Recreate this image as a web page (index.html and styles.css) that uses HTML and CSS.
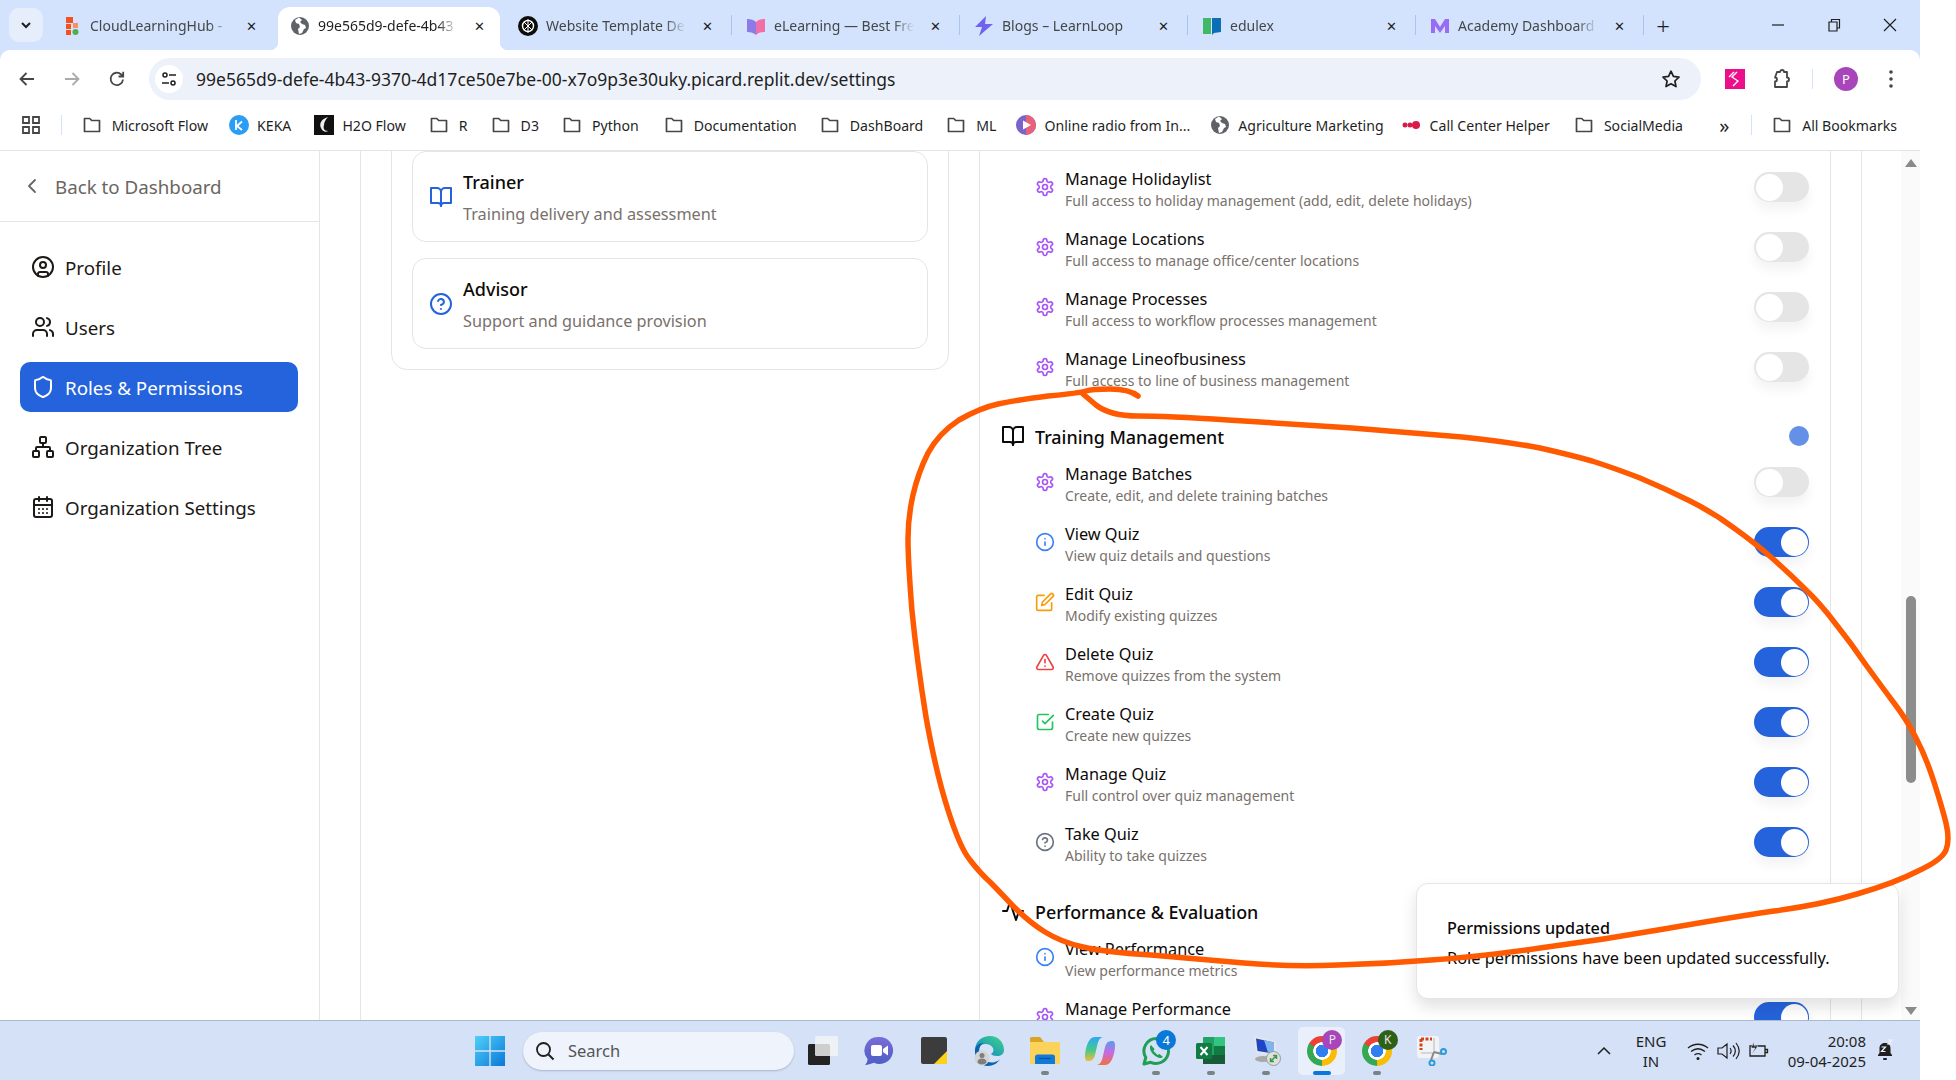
FILE: index.html
```html
<!DOCTYPE html>
<html>
<head>
    <meta charset="utf-8">
    <title>Roles &amp; Permissions</title>
    <link rel="stylesheet" href="styles.css">
</head>
<body>

<!-- icon sprite -->
<svg class="sprite" xmlns="http://www.w3.org/2000/svg">
	<symbol id="i-gear" viewBox="0 0 24 24"><path d="M12.22 2h-.44a2 2 0 0 0-2 2v.18a2 2 0 0 1-1 1.73l-.43.25a2 2 0 0 1-2 0l-.15-.08a2 2 0 0 0-2.73.73l-.22.38a2 2 0 0 0 .73 2.73l.15.1a2 2 0 0 1 1 1.72v.51a2 2 0 0 1-1 1.74l-.15.09a2 2 0 0 0-.73 2.73l.22.38a2 2 0 0 0 2.73.73l.15-.08a2 2 0 0 1 2 0l.43.25a2 2 0 0 1 1 1.73V20a2 2 0 0 0 2 2h.44a2 2 0 0 0 2-2v-.18a2 2 0 0 1 1-1.73l.43-.25a2 2 0 0 1 2 0l.15.08a2 2 0 0 0 2.73-.73l.22-.39a2 2 0 0 0-.73-2.73l-.15-.08a2 2 0 0 1-1-1.74v-.5a2 2 0 0 1 1-1.74l.15-.09a2 2 0 0 0 .73-2.73l-.22-.38a2 2 0 0 0-2.73-.73l-.15.08a2 2 0 0 1-2 0l-.43-.25a2 2 0 0 1-1-1.73V4a2 2 0 0 0-2-2z"/><circle cx="12" cy="12" r="3"/></symbol>
	<symbol id="i-book" viewBox="0 0 24 24"><path d="M2 3h6a4 4 0 0 1 4 4v14a3 3 0 0 0-3-3H2z"/><path d="M22 3h-6a4 4 0 0 0-4 4v14a3 3 0 0 1 3-3h7z"/></symbol>
	<symbol id="i-help" viewBox="0 0 24 24"><circle cx="12" cy="12" r="10"/><path d="M9.09 9a3 3 0 0 1 5.83 1c0 2-3 3-3 3"/><path d="M12 17h.01"/></symbol>
	<symbol id="i-info" viewBox="0 0 24 24"><circle cx="12" cy="12" r="10"/><path d="M12 16v-4"/><path d="M12 8h.01"/></symbol>
	<symbol id="i-edit" viewBox="0 0 24 24"><path d="M11 4H4a2 2 0 0 0-2 2v14a2 2 0 0 0 2 2h14a2 2 0 0 0 2-2v-7"/><path d="M18.5 2.5a2.121 2.121 0 0 1 3 3L12 15l-4 1 1-4 9.5-9.5z"/></symbol>
	<symbol id="i-alert" viewBox="0 0 24 24"><path d="m21.73 18-8-14a2 2 0 0 0-3.48 0l-8 14A2 2 0 0 0 4 21h16a2 2 0 0 0 1.73-3Z"/><path d="M12 9v4"/><path d="M12 17h.01"/></symbol>
	<symbol id="i-check" viewBox="0 0 24 24"><path d="m9 11 3 3L22 4"/><path d="M21 12v7a2 2 0 0 1-2 2H5a2 2 0 0 1-2-2V5a2 2 0 0 1 2-2h11"/></symbol>
	<symbol id="i-activity" viewBox="0 0 24 24"><path d="M22 12h-4l-3 9L9 3l-3 9H2"/></symbol>
	<symbol id="i-folder" viewBox="0 0 20 20"><path d="M2.5 16.500v-13h5.200l2 2h7.800v11z" fill="none" stroke="#444746" stroke-width="1.700" stroke-linejoin="round"/></symbol>
	<symbol id="i-globe" viewBox="0 0 20 20"><circle cx="10" cy="10" r="9" fill="#5f6368"/><path d="M9 1.500 5 4l1 3 3 1 1 3-2 2 1 5 3-1 2-4 2-1-1-3-3-1-2-2 2-2z" fill="#fff"/></symbol>
</svg>

<div class="screen">

	<!-- tabs -->
	<div class="tabstrip">
		<span class="tab-search"><svg width="14" height="14" viewBox="0 0 14 14"><path d="m3 5 4 4 4-4" fill="none" stroke="#1f1f1f" stroke-width="2"/></svg></span>
		<div class="tab nosep">
			<svg class="fav" viewBox="0 0 20 20"><rect x="4" y="1" width="7" height="6" fill="#f4511e"/><rect x="4" y="8" width="5" height="5" fill="#f4511e"/><rect x="4" y="14" width="5" height="5" fill="#f4511e"/><rect x="11" y="7" width="5" height="5" fill="#ff8a65"/><circle cx="13.500" cy="16" r="3" fill="#4caf50"/></svg>
			<span class="tab-title">CloudLearningHub - </span><span class="tab-x">✕</span>
		</div>
		<div class="tab active">
			<svg class="fav"><use href="#i-globe"/></svg>
			<span class="tab-title">99e565d9-defe-4b43</span><span class="tab-x">✕</span>
		</div>
		<div class="tab">
			<svg class="fav" viewBox="0 0 20 20"><circle cx="10" cy="10" r="10" fill="#0d0d0d"/><circle cx="10" cy="10" r="5.500" fill="none" stroke="#fff" stroke-width="1.400"/><path d="M6 6l8 8M14 6l-8 8M10 3v14" stroke="#fff"/></svg>
			<span class="tab-title">Website Template De</span><span class="tab-x">✕</span>
		</div>
		<div class="tab">
			<svg class="fav" viewBox="0 0 20 20"><path d="M1 3c4 0 7 1 9 3v13c-2-2-5-3-9-3z" fill="#8c7ae6"/><path d="M19 3c-4 0-7 1-9 3v13c2-2 5-3 9-3z" fill="#f06fa8"/></svg>
			<span class="tab-title">eLearning — Best Fre</span><span class="tab-x">✕</span>
		</div>
		<div class="tab">
			<svg class="fav" viewBox="0 0 20 20"><path d="M12 0 1 11h7l-3 9 14-12h-8z" fill="#6d63f0"/></svg>
			<span class="tab-title">Blogs – LearnLoop</span><span class="tab-x">✕</span>
		</div>
		<div class="tab">
			<svg class="fav" viewBox="0 0 20 20"><path d="M1 2h8v16H1z" fill="#3fb868"/><path d="M10 2h9v14l-7 1-2 2z" fill="#0b6fb8"/></svg>
			<span class="tab-title">edulex</span><span class="tab-x">✕</span>
		</div>
		<div class="tab">
			<svg class="fav" viewBox="0 0 20 20"><path d="M1 3 5 3 10 11 15 3 19 3 19 17 15 17 15 10 10 17 5 10 5 17 1 17z" fill="#9a6cf5"/></svg>
			<span class="tab-title">Academy Dashboard</span><span class="tab-x">✕</span>
		</div>
		<span class="tab-new">+</span>
		<div class="winctl">
			<svg width="16" height="16" viewBox="0 0 16 16"><path d="M2 8h12" stroke="#1f1f1f" stroke-width="1.200"/></svg>
			<svg width="16" height="16" viewBox="0 0 16 16"><path d="M3 5h8v9H3zM5.500 5V2.500h8V11H11" fill="none" stroke="#1f1f1f" stroke-width="1.200"/></svg>
			<svg width="16" height="16" viewBox="0 0 16 16"><path d="m2 2 12 12M14 2 2 14" stroke="#1f1f1f" stroke-width="1.200"/></svg>
		</div>
	</div>

	<!-- address bar -->
	<div class="toolbar">
		<svg class="tool" viewBox="0 0 20 20"><path d="M17 10H4M9.500 4 3.500 10l6 6" fill="none" stroke="#444746" stroke-width="1.800"/></svg>
		<svg class="tool" viewBox="0 0 20 20"><path d="M3 10h13M10.500 4l6 6-6 6" fill="none" stroke="#a8abae" stroke-width="1.800"/></svg>
		<svg class="tool" viewBox="0 0 20 20"><path d="M16 10.500a6.200 6.200 0 1 1-1.800-5L16 7.300M16.200 2.800v4.700h-4.700" fill="none" stroke="#444746" stroke-width="1.800"/></svg>
		<div class="omnibox">
			<span class="site-btn"><svg width="18" height="18" viewBox="0 0 18 18"><circle cx="5" cy="5" r="2" fill="none" stroke="#1f1f1f" stroke-width="1.500"/><path d="M9 5h7M2 13h7" stroke="#1f1f1f" stroke-width="1.500"/><circle cx="13" cy="13" r="2" fill="none" stroke="#1f1f1f" stroke-width="1.500"/></svg></span>
			<span class="url">99e565d9-defe-4b43-9370-4d17ce50e7be-00-x7o9p3e30uky.picard.replit.dev/settings</span>
			<svg class="star" viewBox="0 0 20 20"><path d="m10 2.200 2.400 5.200 5.600.7-4.100 3.900 1.100 5.600-5-2.800-5 2.800 1.100-5.600L2 8.100l5.600-.7z" fill="none" stroke="#1f1f1f" stroke-width="1.700" stroke-linejoin="round"/></svg>
		</div>
		<div class="tool-right">
			<svg class="ext-pink" viewBox="0 0 20 20"><rect width="20" height="20" fill="#ec0f8c"/><path d="m12 3-5 5 6 4-5 5M9 3 4 8" fill="none" stroke="#fff" stroke-width="1.300"/></svg>
			<svg class="ext-puzzle" viewBox="0 0 24 24"><path d="M8 5h3a2 2 0 1 1 4 0h3v5.500a2 2 0 1 1 0 4V20H6v-5.500a2 2 0 0 0 2-2 2 2 0 0 0-2-2z" fill="none" stroke="#444746" stroke-width="1.800" stroke-linejoin="round"/></svg>
			<span class="tool-sep"></span>
			<span class="avatar">P</span>
			<svg class="dots" viewBox="0 0 4 18"><circle cx="2" cy="2" r="1.800"/><circle cx="2" cy="9" r="1.800"/><circle cx="2" cy="16" r="1.800"/></svg>
		</div>
	</div>

	<!-- bookmarks -->
	<div class="bookmarks">
		<svg class="apps" viewBox="0 0 20 20"><path d="M2 2h6v6H2zM12 2h6v6h-6zM2 12h6v6H2zM12 12h6v6h-6z" fill="none" stroke="#444746" stroke-width="1.800"/></svg>
		<span class="bm-sep"></span>
		<a class="bm bm-ms"><svg class="bm-icon"><use href="#i-folder"/></svg>Microsoft Flow</a>
		<a class="bm tight"><svg class="bm-icon" viewBox="0 0 20 20"><circle cx="10" cy="10" r="10" fill="#2a9df4"/><path d="M7 5v10M13 6.500 8 11l5 4" fill="none" stroke="#fff" stroke-width="1.800"/></svg>KEKA</a>
		<a class="bm tight"><svg class="bm-icon" viewBox="0 0 20 20"><rect width="20" height="20" fill="#111"/><path d="M14 2C7 4 5 9 7 13c1 3 5 5 7 3-4 0-5-3-4-6 0-3 2-6 4-8z" fill="#eee"/></svg>H2O Flow</a>
		<a class="bm"><svg class="bm-icon"><use href="#i-folder"/></svg>R</a>
		<a class="bm"><svg class="bm-icon"><use href="#i-folder"/></svg>D3</a>
		<a class="bm bm-py"><svg class="bm-icon"><use href="#i-folder"/></svg>Python</a>
		<a class="bm"><svg class="bm-icon"><use href="#i-folder"/></svg>Documentation</a>
		<a class="bm"><svg class="bm-icon"><use href="#i-folder"/></svg>DashBoard</a>
		<a class="bm bm-ml"><svg class="bm-icon"><use href="#i-folder"/></svg>ML</a>
		<a class="bm tight bm-radio"><svg class="bm-icon" viewBox="0 0 20 20"><circle cx="10" cy="10" r="10" fill="#7a63c9"/><path d="M10 0a10 10 0 0 1 0 20z" fill="#e8607a"/><path d="m7 5.500 8 4.500-8 4.500z" fill="#fff"/></svg>Online radio from In...</a>
		<a class="bm tight bm-agri"><svg class="bm-icon"><use href="#i-globe"/></svg>Agriculture Marketing</a>
		<a class="bm tight bm-call"><svg class="bm-icon" viewBox="0 0 20 20"><circle cx="3" cy="10" r="2.500" fill="#d81b4a"/><circle cx="8" cy="10" r="2.500" fill="#d81b4a"/><circle cx="14" cy="10" r="4" fill="#d81b4a"/></svg>Call Center Helper</a>
		<a class="bm"><svg class="bm-icon"><use href="#i-folder"/></svg>SocialMedia</a>
		<span class="bm-more">»</span>
		<span class="bm-sep end"></span>
		<a class="bm"><svg class="bm-icon"><use href="#i-folder"/></svg>All Bookmarks</a>
	</div>

	<!-- page -->
	<div class="page">
		<aside class="sidebar">
			<div class="back">
				<svg class="ln back-icon" viewBox="0 0 24 24"><path d="m15 18-6-6 6-6"/></svg>
				<span>Back to Dashboard</span>
			</div>
			<nav class="nav">
				<a class="nav-item"><svg class="ln" viewBox="0 0 24 24"><circle cx="12" cy="12" r="10"/><circle cx="12" cy="10" r="3"/><path d="M7 20.662V19a2 2 0 0 1 2-2h6a2 2 0 0 1 2 2v1.662"/></svg><span>Profile</span></a>
				<a class="nav-item"><svg class="ln" viewBox="0 0 24 24"><path d="M16 21v-2a4 4 0 0 0-4-4H6a4 4 0 0 0-4 4v2"/><circle cx="9" cy="7" r="4"/><path d="M22 21v-2a4 4 0 0 0-3-3.870"/><path d="M16 3.130a4 4 0 0 1 0 7.750"/></svg><span>Users</span></a>
				<a class="nav-item active"><svg class="ln" viewBox="0 0 24 24"><path d="M20 13c0 5-3.500 7.500-7.660 8.950a1 1 0 0 1-.67-.01C7.500 20.500 4 18 4 13V6a1 1 0 0 1 1-1c2 0 4.500-1.200 6.240-2.720a1.170 1.170 0 0 1 1.520 0C14.510 3.810 17 5 19 5a1 1 0 0 1 1 1z"/></svg><span>Roles &amp; Permissions</span></a>
				<a class="nav-item"><svg class="ln" viewBox="0 0 24 24"><rect x="16" y="16" width="6" height="6" rx="1"/><rect x="2" y="16" width="6" height="6" rx="1"/><rect x="9" y="2" width="6" height="6" rx="1"/><path d="M5 16v-3a1 1 0 0 1 1-1h12a1 1 0 0 1 1 1v3"/><path d="M12 12V8"/></svg><span>Organization Tree</span></a>
				<a class="nav-item"><svg class="ln" viewBox="0 0 24 24"><path d="M8 2v4"/><path d="M16 2v4"/><rect x="3" y="4" width="18" height="18" rx="2"/><path d="M3 10h18"/><path d="M8 14h.01M12 14h.01M16 14h.01M8 18h.01M12 18h.01M16 18h.01"/></svg><span>Organization Settings</span></a>
			</nav>
		</aside>

		<main class="content">
			<div class="columns">
				<section class="role-panel">
					<div class="role-card">
						<svg class="ln role-icon"><use href="#i-book"/></svg>
						<div><h3>Trainer</h3><p>Training delivery and assessment</p></div>
					</div>
					<div class="role-card">
						<svg class="ln role-icon"><use href="#i-help"/></svg>
						<div><h3>Advisor</h3><p>Support and guidance provision</p></div>
					</div>
				</section>

				<section class="perm-panel">
					<div class="perm"><svg class="ln c-purple"><use href="#i-gear"/></svg><div class="perm-text"><b>Manage Holidaylist</b><small>Full access to holiday management (add, edit, delete holidays)</small></div><span class="toggle"></span></div>
					<div class="perm"><svg class="ln c-purple"><use href="#i-gear"/></svg><div class="perm-text"><b>Manage Locations</b><small>Full access to manage office/center locations</small></div><span class="toggle"></span></div>
					<div class="perm"><svg class="ln c-purple"><use href="#i-gear"/></svg><div class="perm-text"><b>Manage Processes</b><small>Full access to workflow processes management</small></div><span class="toggle"></span></div>
					<div class="perm"><svg class="ln c-purple"><use href="#i-gear"/></svg><div class="perm-text"><b>Manage Lineofbusiness</b><small>Full access to line of business management</small></div><span class="toggle"></span></div>

					<div class="group-head"><svg class="ln"><use href="#i-book"/></svg><h4>Training Management</h4><span class="group-dot"></span></div>
					<div class="perm"><svg class="ln c-purple"><use href="#i-gear"/></svg><div class="perm-text"><b>Manage Batches</b><small>Create, edit, and delete training batches</small></div><span class="toggle"></span></div>
					<div class="perm"><svg class="ln c-blue"><use href="#i-info"/></svg><div class="perm-text"><b>View Quiz</b><small>View quiz details and questions</small></div><span class="toggle on"></span></div>
					<div class="perm"><svg class="ln c-amber"><use href="#i-edit"/></svg><div class="perm-text"><b>Edit Quiz</b><small>Modify existing quizzes</small></div><span class="toggle on"></span></div>
					<div class="perm"><svg class="ln c-red"><use href="#i-alert"/></svg><div class="perm-text"><b>Delete Quiz</b><small>Remove quizzes from the system</small></div><span class="toggle on"></span></div>
					<div class="perm"><svg class="ln c-green"><use href="#i-check"/></svg><div class="perm-text"><b>Create Quiz</b><small>Create new quizzes</small></div><span class="toggle on"></span></div>
					<div class="perm"><svg class="ln c-purple"><use href="#i-gear"/></svg><div class="perm-text"><b>Manage Quiz</b><small>Full control over quiz management</small></div><span class="toggle on"></span></div>
					<div class="perm"><svg class="ln c-gray"><use href="#i-help"/></svg><div class="perm-text"><b>Take Quiz</b><small>Ability to take quizzes</small></div><span class="toggle on"></span></div>

					<div class="group-head"><svg class="ln"><use href="#i-activity"/></svg><h4>Performance &amp; Evaluation</h4></div>
					<div class="perm"><svg class="ln c-blue"><use href="#i-info"/></svg><div class="perm-text"><b>View Performance</b><small>View performance metrics</small></div><span class="toggle"></span></div>
					<div class="perm"><svg class="ln c-purple"><use href="#i-gear"/></svg><div class="perm-text"><b>Manage Performance</b></div><span class="toggle on"></span></div>
				</section>
			</div>
		</main>

		<div class="scrollbar">
			<i class="arrow up"></i>
			<span class="thumb"></span>
			<i class="arrow down"></i>
		</div>

		<div class="toast">
			<strong>Permissions updated</strong>
			<span>Role permissions have been updated successfully.</span>
		</div>
	</div>

	<!-- taskbar -->
	<div class="taskbar">
		<svg class="winlogo" viewBox="0 0 30 30"><defs><linearGradient id="wg" x1="0" y1="0" x2="1" y2="1"><stop offset="0" stop-color="#4fd0f8"/><stop offset="1" stop-color="#0a78d8"/></linearGradient></defs><path d="M0 0h14.300v14.300H0zM15.700 0H30v14.300H15.700zM0 15.700h14.300V30H0zM15.700 15.700H30V30H15.700z" fill="url(#wg)"/></svg>
		<div class="search">
			<svg width="22" height="22" viewBox="0 0 22 22"><circle cx="9.500" cy="9.500" r="6.500" fill="none" stroke="#1f1f1f" stroke-width="1.800"/><path d="m14.500 14.500 5 5" stroke="#1f1f1f" stroke-width="2"/></svg>
			<span>Search</span>
		</div>
		<div class="apps-row">
			<!-- task view -->
			<span class="app"><svg viewBox="0 0 30 30"><rect x="0" y="8" width="22" height="21" rx="1.500" fill="#232323"/><rect x="7" y="0" width="23" height="20" rx="1.500" fill="#f4f4f4" opacity=".82"/></svg></span>
			<!-- meet -->
			<span class="app"><svg viewBox="0 0 30 30"><defs><linearGradient id="mt" x1="0" y1="0" x2="0" y2="1"><stop offset="0" stop-color="#7a6cd8"/><stop offset="1" stop-color="#4c5fc4"/></linearGradient></defs><path d="M15.500 1a13.500 13.500 0 1 1-5.500 25.800C7 28 3.500 29 1 29c1.500-1.500 2.500-3.500 2.600-6A13.500 13.500 0 0 1 15.500 1z" fill="url(#mt)"/><rect x="7" y="9" width="11" height="11" rx="2" fill="#fff"/><path d="m19 13 5-3.500v10L19 16z" fill="#fff"/></svg></span>
			<!-- sticky notes -->
			<span class="app"><svg viewBox="0 0 30 30"><rect x="2" y="1" width="26" height="27" rx="2" fill="#3c3c3c"/><path d="M28 15v13H15z" fill="#fcd116"/></svg></span>
			<!-- edge with profile -->
			<span class="app"><svg viewBox="0 0 30 30"><defs><linearGradient id="ed" x1="0" y1="1" x2="1" y2="0"><stop offset="0" stop-color="#0f7fc8"/><stop offset="1" stop-color="#3fd68a"/></linearGradient></defs><path d="M1 13C2 5 8 0 16 0c8 0 14 6 14 14 0 4-3 6-7 6-3 0-5-1-6-2 2-1 3-3 2-6-2-4-8-5-12-3-3 1-5 3-6 4z" fill="url(#ed)"/><path d="M1 13c1-3 4-6 9-6-4 2-6 6-4 11 2 6 9 10 15 8 3-1 5-2 6-4-3 5-8 8-13 8C6 30 0 22 1 13z" fill="#0c63ad"/><circle cx="8" cy="22" r="7.500" fill="#d4d4d4"/><circle cx="8" cy="19.500" r="2.500" fill="#7e7e7e"/><path d="M3.500 26.500c0-3 2-4 4.500-4s4.500 1 4.500 4c-1 1-2.500 2-4.500 2s-3.500-1-4.500-2z" fill="#7e7e7e"/></svg></span>
			<!-- explorer -->
			<span class="app has-dot"><svg viewBox="0 0 30 30"><path d="M0 2.500A1.500 1.500 0 0 1 1.500 1H10l4 5H0z" fill="#dba427"/><rect x="0" y="6" width="30" height="22" rx="1" fill="#fcd35a"/><path d="M5 28v-7a2.500 2.500 0 0 1 2.500-2.500h15A2.500 2.500 0 0 1 25 21v7z" fill="#0f7ad8"/><path d="M9 22.500h12" stroke="#0b4f96" stroke-width="1.200"/></svg></span>
			<!-- copilot -->
			<span class="app"><svg viewBox="0 0 30 30"><defs><linearGradient id="copa" x1="0" y1="0" x2="0" y2="1"><stop offset="0" stop-color="#2fa8f5"/><stop offset=".55" stop-color="#45c98a"/><stop offset="1" stop-color="#f5b83a"/></linearGradient><linearGradient id="copb" x1="0" y1="0" x2="0" y2="1"><stop offset="0" stop-color="#5a9cf0"/><stop offset=".5" stop-color="#c96ae0"/><stop offset="1" stop-color="#f5703a"/></linearGradient></defs><path d="M10 1h8c-3 .5-4.500 3-5.500 7l-2.500 11c-1 4-3 6-6 6H2C0 25-.5 20 .5 15 2 7 5 1 10 1z" fill="url(#copa)"/><path d="M20 29h-8c3-.5 4.500-3 5.500-7L20 11c1-4 3-6 6-6h2c2 0 2.500 5 1.500 10C28 23 25 29 20 29z" fill="url(#copb)"/></svg></span>
			<!-- whatsapp -->
			<span class="app has-dot"><svg viewBox="0 0 30 30"><path d="M15.500 2.500a12.500 12.500 0 0 0-10.700 19L3 28l6.700-1.700A12.500 12.500 0 1 0 15.500 2.500z" fill="none" stroke="#1f9e55" stroke-width="3" stroke-linejoin="round"/><path d="M10 9c-2 2-1 6 2.500 9.500S20 23 22 21l-3.500-3-2 1-4-4 1-2z" fill="#1f9e55"/></svg><em class="badge">4</em></span>
			<!-- excel -->
			<span class="app has-dot"><svg viewBox="0 0 30 30"><rect x="7" y="1" width="22" height="27" rx="1" fill="#21a366"/><rect x="18" y="1" width="11" height="9" fill="#33c481"/><rect x="18" y="10" width="11" height="9" fill="#107c41"/><rect x="7" y="19" width="22" height="9" fill="#185c37"/><rect x="0" y="7" width="16" height="16" rx="1.500" fill="#107c41"/><path d="m4.500 11 7 8M11.500 11l-7 8" stroke="#fff" stroke-width="2"/></svg></span>
			<!-- remote desktop -->
			<span class="app has-dot"><svg viewBox="0 0 30 30"><path d="M3 0 25 5v15L5 17z" fill="#e6e6e6"/><path d="M5 2.500 23 6.500v11L6.500 15z" fill="#1f45c4"/><path d="M13 4 23 6.500v11l-6-1z" fill="#7fb4f0"/><ellipse cx="12" cy="23" rx="8" ry="3" fill="#a8a8a8"/><circle cx="22.500" cy="22.500" r="7" fill="#e0e0e0" stroke="#999"/><path d="m19.500 25.500 6-6M19.500 22v3.500H23M25.500 23v-3.500H22" fill="none" stroke="#3a9b4a" stroke-width="1.500"/></svg></span>
			<span class="app running has-dot"><i class="chrome"></i><em class="profile purple">P</em></span>
			<span class="app has-dot"><i class="chrome"></i><em class="profile olive">K</em></span>
			<!-- snipping tool -->
			<span class="app"><svg viewBox="0 0 30 30"><rect x="0" y="0" width="22" height="22" rx="3" fill="#f2f3f5"/><path d="M4 3h11M4 3v11" stroke="#d8401a" stroke-width="3" stroke-dasharray="3 1.500" fill="none"/><path d="M17 2v15M4 17h13" stroke="#c9ccd0" stroke-width="1.500"/><path d="m17 16 8 2M17 16l-3 8" stroke="#888" stroke-width="2"/><circle cx="26.500" cy="15.500" r="2.500" fill="none" stroke="#2b9bd8" stroke-width="2"/><circle cx="15" cy="27" r="2.500" fill="none" stroke="#2b9bd8" stroke-width="2"/></svg></span>
		</div>
		<div class="tray">
			<svg class="tray-chev" viewBox="0 0 16 10"><path d="m2 8 6-6 6 6" fill="none" stroke="#1f1f1f" stroke-width="1.500"/></svg>
			<div class="lang"><span>ENG</span><span>IN</span></div>
			<svg class="tray-ic" viewBox="0 0 24 24"><path d="M2 9c6-5 14-5 20 0M5 12.500c4.500-3.500 9.500-3.500 14 0M8.500 16c2-1.500 5-1.500 7 0" fill="none" stroke="#1f1f1f" stroke-width="1.300"/><circle cx="12" cy="19.500" r="1.500" fill="#1f1f1f"/></svg>
			<svg class="tray-ic" viewBox="0 0 24 24"><path d="M2 9h4l5-4v14l-5-4H2zM14 9c1.500 2 1.500 4 0 6M17 6.500c3 3.500 3 7.500 0 11M20 4c4 5 4 11 0 16" fill="none" stroke="#1f1f1f" stroke-width="1.200"/></svg>
			<svg class="tray-ic" viewBox="0 0 24 24"><path d="M4 7h15v10H4zM19 10.500h2.500v3H19" fill="none" stroke="#1f1f1f" stroke-width="1.300"/><path d="m8 3-3 6h4l-3 6 6-8H8z" fill="#1f1f1f" stroke="#d4e1f7" stroke-width=".6"/></svg>
			<div class="clock"><span>20:08</span><span>09-04-2025</span></div>
			<svg class="tray-bell" viewBox="0 0 20 24"><path d="M3 17v-1l1.500-2V9c0-3 2.500-5 5.500-5s5.500 2 5.500 5v5l1.500 2v1z" fill="#1f1f1f"/><rect x="8" y="19" width="4" height="2" rx="1" fill="#1f1f1f"/><path d="M6.500 8h4l-4 4.500h4M13 1h4l-4 4h4" fill="none" stroke="#eef3fc" stroke-width="1.200"/></svg>
		</div>
	</div>
</div>

<!-- freehand marker drawn over the screenshot -->
<svg class="marker" viewBox="0 0 1956 1080" xmlns="http://www.w3.org/2000/svg">
	<path d="M1138 396Q1129 389 1110 389Q1092 389 1086 391Q1080 393 1048 396Q1017 400 998 404Q980 408 959 420Q939 433 928 453Q918 473 913 495Q908 517 908 539Q908 561 912 611Q917 661 926 717Q936 773 948 810Q960 848 970 860Q980 873 990 882Q999 891 1014 907Q1030 923 1045 932Q1061 942 1083 947Q1104 952 1151 955Q1198 959 1244 963Q1291 967 1338 965Q1384 964 1431 960Q1478 957 1540 948Q1602 940 1664 929Q1727 918 1774 911Q1820 905 1857 894Q1895 883 1918 871Q1942 860 1946 850Q1950 840 1946 823Q1942 807 1934 782Q1926 757 1916 738Q1907 720 1894 703Q1882 687 1866 665Q1851 643 1835 623Q1820 603 1804 588Q1789 573 1772 558Q1755 543 1734 528Q1714 513 1690 501Q1666 489 1640 478Q1614 468 1592 461Q1571 455 1540 448Q1509 442 1462 437Q1415 433 1352 428Q1291 424 1228 420Q1166 416 1138 416Q1110 416 1096 405L1083 394"/>
</svg>

</body>
</html>
```

FILE: styles.css
```css
*{ margin:0; padding:0; box-sizing:border-box;}
html,body{ width:1956px; height:1080px; overflow:hidden; background:#fff;}
body{ position:relative; font-family:"Noto Sans","Liberation Sans",sans-serif; color:#1f1f1f;}
a{ text-decoration:none; color:inherit;}
h3,h4,b,strong{ font-weight:500;}
svg{ display:block; flex:none;}
.sprite{ width:0; height:0; position:absolute;}
.screen{ width:1920px; height:1080px; display:flex; flex-direction:column; background:linear-gradient(#d3e3fd 0 60px,#fff 60px);}

/* line icons */
.ln{ width:24px; height:24px; fill:none; stroke:currentColor; stroke-width:2; stroke-linecap:round; stroke-linejoin:round;}
.c-purple{ color:#a855f7;}
.c-blue{ color:#3b82f6;}
.c-amber{ color:#f59e0b;}
.c-red{ color:#ef4444;}
.c-green{ color:#22c55e;}
.c-gray{ color:#6b7280;}

/* tabs */
.tabstrip{ height:50px; flex:none; display:flex; align-items:flex-end; background:#d3e3fd; padding-left:9px;}
.tab-search{ width:34px; height:34px; margin:0 9px 8px 0; border-radius:10px; background:#e6eefc; display:flex; align-items:center; justify-content:center;}
.tab{ position:relative; width:228px; height:43px; display:flex; align-items:center; padding:0 19px 6px 10px; font-size:14px; color:#444746;}
.tab::after{ content:""; position:absolute; right:4px; top:8px; width:1px; height:20px; background:#a9c4ef;}
.tab.nosep::after{ display:none;}
.tab.active{ color:#1f1f1f;}
.tab.active::before{ content:""; position:absolute; left:-2px; right:8px; top:0; bottom:0; background:#fff; border-radius:12px 12px 0 0;}
.tab.active::after{ left:-10px; right:0; top:auto; bottom:0; width:auto; height:8px; background:radial-gradient(circle at 0 0,transparent 8px,#fff 8.500px) left bottom/8px 8px no-repeat,radial-gradient(circle at 100% 0,transparent 8px,#fff 8.500px) right bottom/8px 8px no-repeat;}
.fav{ position:relative; width:20px; height:20px; margin-right:8px;}
.tab-title{ position:relative; flex:none; width:140px; white-space:nowrap; overflow:hidden; -webkit-mask-image:linear-gradient(to right,#000 85%,transparent);}
.tab-x{ position:relative; margin-left:auto; width:20px; text-align:center; font-size:13px; color:#1f1f1f;}
.tab-new{ width:30px; height:43px; padding-bottom:6px; display:flex; align-items:center; justify-content:center; font-size:24px; font-weight:300;}
.winctl{ margin-left:auto; height:50px; display:flex; align-items:center; gap:40px; padding-right:22px;}

/* toolbar */
.toolbar{ height:50px; flex:none; display:flex; align-items:flex-start; padding:8px 0 0 17px; background:#fff; border-radius:10px 10px 0 0;}
.tool{ width:20px; height:20px; margin:11px 25px 0 0;}
.omnibox{ width:1552px; height:42px; margin-left:-3px; display:flex; align-items:center; padding:0 20px 0 6px; border-radius:21px; background:#edf2fa;}
.site-btn{ width:28px; height:28px; border-radius:50%; background:#fff; display:flex; align-items:center; justify-content:center;}
.url{ margin-left:13px; font-size:17.500px; flex:1; white-space:nowrap;}
.star{ width:20px; height:20px;}
.tool-right{ display:flex; align-items:center; height:42px; padding-left:24px;}
.ext-pink{ width:20px; height:20px;}
.ext-puzzle{ width:24px; height:24px; margin-left:24px;}
.tool-sep{ width:1px; height:20px; margin:0 21px 0 19px; background:#d3e3fd;}
.avatar{ width:24px; height:24px; border-radius:50%; background:#a945bb; color:#fff; font-size:13px; text-align:center; line-height:24px;}
.dots{ width:4px; height:18px; margin-left:31px; fill:#444746;}

/* bookmarks */
.bookmarks{ height:50px; flex:none; display:flex; align-items:center; padding-left:21px; font-size:14.100px; color:#1f1f1f; background:#fff;}
.apps{ width:20px; height:20px;}
.bm-sep{ width:1px; height:20px; margin:0 20px; background:#d3e3fd;}
.bm-sep.end{ margin-left:9px;}
.bm{ display:flex; align-items:center; white-space:nowrap; margin-right:23px;}
.bm-icon{ width:20px; height:20px; margin-right:10px;}
.tight .bm-icon{ margin-right:8px;}
.bm-ms{ margin-right:21px;}
.bm-py{ margin-right:25px;}
.bm-ml{ margin-right:20px;}
.bm-radio{ margin-right:20px;}
.bm-agri{ margin-right:18px;}
.bm-call{ margin-right:24px;}
.bm-more{ width:54px; font-size:20px; text-align:center;}

/* page */
.page{ flex:1; min-height:0; display:flex; position:relative; overflow:hidden; background:#fff; border-top:1px solid #e5e5e5;}
.sidebar{ width:320px; flex:none; border-right:1px solid #e5e5e5;}
.back{ height:71px; display:flex; align-items:center; padding-left:20px; gap:11px; font-size:18.750px; color:#6b6560; border-bottom:1px solid #e5e5e5;}
.back-icon{ width:24px; height:24px; stroke-width:1.800;}
.nav{ padding:20px 21px 0 20px; display:flex; flex-direction:column; gap:10px;}
.nav-item{ height:50px; display:flex; align-items:center; gap:10px; padding-left:11px; border-radius:10px; font-size:18.750px; color:#1c1917;}
.nav-item span{ padding-top:1px;}
.nav-item.active{ background:#2563dc; color:#fff;}

.content{ width:1502px; flex:none; padding:0 30px 0 30px; margin-left:40px; border-left:1px solid #e5e5e5; border-right:1px solid #e5e5e5; overflow:hidden;}
.columns{ display:grid; grid-template-columns:558px 1fr; gap:30px; align-items:start;}

.role-panel{ margin-top:-21px; padding:20px; border:1px solid #e5e5e5; border-radius:16px; display:flex; flex-direction:column; gap:16px;}
.role-card{ height:91px; display:flex; align-items:center; gap:10px; padding:0 16px; border:1px solid #e5e5e5; border-radius:14px;}
.role-icon{ color:#2563dc;}
.role-card div{ padding-top:3px;}
.role-card h3{ font-size:18px; line-height:24px; color:#0c0a09;}
.role-card p{ margin-top:8px; font-size:16.250px; line-height:24px; color:#78716c;}

.perm-panel{ height:920px; padding:6px 21px 0 20px; border-left:1px solid #e5e5e5; border-right:1px solid #e5e5e5;}
.perm{ height:60px; display:flex; align-items:center; padding-left:35px;}
.perm .ln{ width:20px; height:20px;}
.perm-text{ flex:1; min-height:44px; margin-left:10px; margin-top:3px;}
.perm-text b,.perm-text small{ display:block; white-space:nowrap;}
.perm-text b{ font-size:16.300px; line-height:24px; font-weight:400; color:#0c0a09;}
.perm-text small{ font-size:14px; line-height:20px; color:#78716c;}
.group-head{ height:55px; padding-top:24px; display:flex; align-items:center; gap:10px; padding-left:1px;}
.group-head h4{ font-size:17.900px; color:#0c0a09; white-space:nowrap;}
.group-head .ln{ color:#0c0a09; margin-top:-2px;}
.group-dot{ width:20px; height:20px; margin:-2px 0 0 auto; border-radius:50%; background:#6490e8;}

.toggle{ width:55px; height:30px; border-radius:15px; background:#e5e5e5; padding:1.500px; box-shadow:0 8px 12px rgba(0,0,0,.05);}
.toggle::before{ content:""; display:block; width:27px; height:27px; border-radius:50%; background:#fff;}
.toggle.on{ background:#2563dc; padding-left:26.500px;}

.scrollbar{ width:19px; margin-left:auto; flex:none; background:#fafafa; display:flex; flex-direction:column; align-items:center; padding-top:8px;}
.arrow{ width:0; height:0; border-left:6px solid transparent; border-right:6px solid transparent;}
.arrow.up{ border-bottom:8px solid #8a8a8a;}
.arrow.down{ border-top:8px solid #8a8a8a; margin-top:224px;}
.thumb{ width:10px; height:187px; margin-top:429px; border-radius:5px; background:#8c8c8c;}

.toast{ position:absolute; left:1416px; top:732px; width:483px; height:116px; padding:4px 30px 0; display:flex; flex-direction:column; justify-content:center; gap:8px; background:#fff; border:1px solid #e5e5e5; border-radius:12px; box-shadow:0 8px 16px rgba(0,0,0,.12);}
.toast strong{ font-size:16.200px; color:#0c0a09;}
.toast span{ font-size:16.350px; color:#0c0a09;}

/* taskbar */
.taskbar{ height:60px; flex:none; display:flex; align-items:center; padding-left:475px; background:#d4e1f7; border-top:1px solid #aeb8cb; position:relative; z-index:0;}
.winlogo{ width:30px; height:30px;}
.search{ width:271px; height:38px; margin-left:18px; display:flex; align-items:center; gap:12px; padding-left:11px; border-radius:19px; background:#eef3fc; box-shadow:0 1px 2px rgba(0,0,0,.2); font-size:16.500px; color:#555;}
.apps-row{ display:flex; margin-left:1.500px;}
.app{ position:relative; width:55.400px; height:48px; display:flex; align-items:center; justify-content:center;}
.app svg{ width:30px; height:30px;}
.has-dot::after{ content:""; position:absolute; left:23.700px; bottom:0; width:8px; height:4px; border-radius:2px; background:#7b8187;}
.running::before{ content:""; position:absolute; left:4px; right:4px; top:0; bottom:0; border-radius:5px; background:#eaf0fb; z-index:-1;}
.running::after{ left:18.700px; width:18px; height:4px; background:#0a78d8;}
.chrome{ width:30px; height:30px; border-radius:50%; background:radial-gradient(circle,#2f7ff0 0 6px,#fff 6.500px 8.500px,transparent 9px),conic-gradient(from -60deg,#ea4335 0 120deg,#fbbc04 120deg 240deg,#34a853 240deg 360deg);}
.badge{ position:absolute; right:7px; top:3px; width:20px; height:20px; border-radius:50%; background:#0a78d8; color:#fff; font-size:13px; font-style:normal; text-align:center; line-height:20px;}
.profile{ position:absolute; right:7px; top:3px; width:20px; height:20px; border-radius:50%; color:#e6e6e6; font-size:12px; font-style:normal; text-align:center; line-height:20px;}
.purple{ background:#a945bb;}
.olive{ background:#2f6018;}
.tray{ margin-left:auto; display:flex; align-items:center; padding-right:25px; font-size:15px; color:#1f1f1f;}
.tray-chev{ width:16px; height:10px;}
.lang{ width:40px; margin-left:19px; display:flex; flex-direction:column; align-items:center; line-height:20px;}
.tray-ic{ width:24px; height:24px; margin-left:6px;}
.lang + .tray-ic{ margin-left:15px;}
.clock{ width:96px; display:flex; flex-direction:column; align-items:flex-end; line-height:20px;}
.tray-bell{ width:20px; height:24px; margin-left:9px;}

.marker{ position:absolute; left:0; top:0; width:1956px; height:1080px; pointer-events:none; fill:none; stroke:#ff5a00; stroke-width:5.500; stroke-linecap:round; stroke-linejoin:round;}
```
